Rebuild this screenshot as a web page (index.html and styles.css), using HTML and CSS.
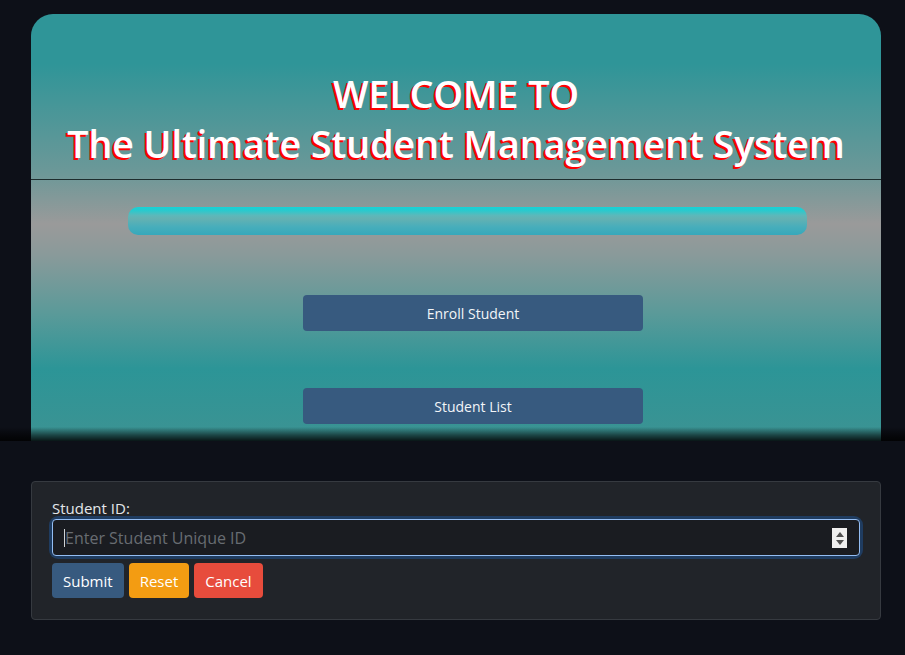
FILE: index.html
```
<!DOCTYPE html>
<html lang="en">
<head>
<meta charset="utf-8">
<title>Student Management System</title>
<link rel="stylesheet" href="styles.css">
</head>
<body>
<section class="hero">
  <div class="hero-card">
    <h1 class="title">WELCOME TO<br>The Ultimate Student Management System</h1>
    <hr class="divider">
    <div class="bar"></div>
    <div class="actions">
      <button class="nav-btn">Enroll Student</button>
      <button class="nav-btn">Student List</button>
    </div>
  </div>
  <div class="hero-fade"></div>
</section>
<section class="lookup">
  <form class="lookup-card">
    <label class="lookup-label" for="sid">Student ID:</label>
    <div class="input-wrap">
      <input id="sid" class="lookup-input" type="text" placeholder="Enter Student Unique ID">
      <span class="caret"></span>
      <span class="spin"><span class="spin-up"></span><span class="spin-down"></span></span>
    </div>
    <div class="form-buttons">
      <button type="button" class="btn btn-primary">Submit</button>
      <button type="button" class="btn btn-warning">Reset</button>
      <button type="button" class="btn btn-danger">Cancel</button>
    </div>
  </form>
</section>
</body>
</html>
```
FILE: styles.css
```
* { box-sizing: border-box; }
html, body { margin: 0; padding: 0; }
body {
  background: #0d1018;
  font-family: "Open Sans", "Noto Sans", sans-serif;
  height: 655px;
  overflow: hidden;
}
.hero {
  position: relative;
  height: 441px;
  overflow: hidden;
  padding: 14px 24px 0 31px;
}
.hero-card {
  height: 520px;
  border-radius: 22px 22px 0 0;
  background: linear-gradient(to bottom,
    #2f9598 0px,
    #2f9598 50px,
    #6d9898 160px,
    #9a9a9a 210px,
    #8a9a9a 240px,
    #5a9a99 300px,
    #2c9597 355px,
    #3b9393 420px);
  padding-top: 55px;
}
.title {
  margin: 0;
  text-align: center;
  color: #ffffff;
  font-size: 37.5px;
  font-weight: 600;
  line-height: 50px;
  letter-spacing: 0;
  text-shadow: -2px 2px 0 #ff0000;
}
.divider {
  margin: 10px 0 0;
  border: 0;
  border-top: 1px solid #1e2d2e;
  height: 0;
}
.bar {
  margin: 27px 74px 0 97px;
  height: 28px;
  border-radius: 10px;
  background: linear-gradient(to bottom, #18d2d6 0%, #22ccd0 10%, #5cb8ba 30%, #64b1b2 42%, #48aebb 70%, #36a8bb 100%);
}
.actions {
  display: flex;
  flex-direction: column;
  gap: 57px;
  margin: 60px 0 0 272px;
  width: 340px;
}
.nav-btn {
  height: 36px;
  width: 340px;
  border: 0;
  border-radius: 4px;
  background: #375a7f;
  color: #f2f5f8;
  font-family: "Open Sans", "Noto Sans", sans-serif;
  font-size: 14px;
}
.hero-fade {
  position: absolute;
  left: 0;
  right: 0;
  bottom: 0;
  height: 14px;
  background: linear-gradient(to bottom, rgba(0,0,0,0) 0%, rgba(0,0,0,0.55) 60%, rgba(0,0,0,0.85) 100%);
}
.lookup {
  padding: 40px 24px 0 31px;
}
.lookup-card {
  background: #212429;
  border: 1px solid #363a40;
  border-radius: 4px;
  padding: 15px 20px 21px;
  margin: 0;
}
.lookup-label {
  display: block;
  color: #e4e7ea;
  font-size: 15px;
  line-height: 22px;
  margin-bottom: 0;
}
.input-wrap {
  position: relative;
  border-radius: 6px;
  box-shadow: 0 0 0 3px #1f3c60;
}
.lookup-input {
  display: block;
  width: 100%;
  height: 37px;
  background: #1a1c21;
  border: 1px solid #93bdf3;
  border-radius: 4px;
  padding: 0 12px;
  color: #e4e7ea;
  font-family: "Open Sans", "Noto Sans", sans-serif;
  font-size: 16px;
  outline: none;
}
.lookup-input::placeholder { color: #686c72; }
.caret {
  position: absolute;
  left: 12px;
  top: 10px;
  width: 1px;
  height: 18px;
  background: #d0d3d6;
}
.spin {
  position: absolute;
  right: 13px;
  top: 9px;
  width: 15px;
  height: 20px;
  background: #efefef;
  display: flex;
  flex-direction: column;
  align-items: center;
  justify-content: center;
  gap: 3px;
}
.spin-up, .spin-down {
  width: 0;
  height: 0;
  border-left: 4px solid transparent;
  border-right: 4px solid transparent;
}
.spin-up { border-bottom: 5px solid #505050; }
.spin-down { border-top: 5px solid #505050; }
.form-buttons {
  display: flex;
  gap: 5px;
  margin-top: 7px;
}
.btn {
  height: 35px;
  border: 0;
  border-radius: 4px;
  padding: 0 11px;
  color: #ffffff;
  font-family: "Open Sans", "Noto Sans", sans-serif;
  font-size: 15px;
}
.btn-primary { background: #375a7f; }
.btn-warning { background: #f39c12; }
.btn-danger { background: #e74c3c; }
```
